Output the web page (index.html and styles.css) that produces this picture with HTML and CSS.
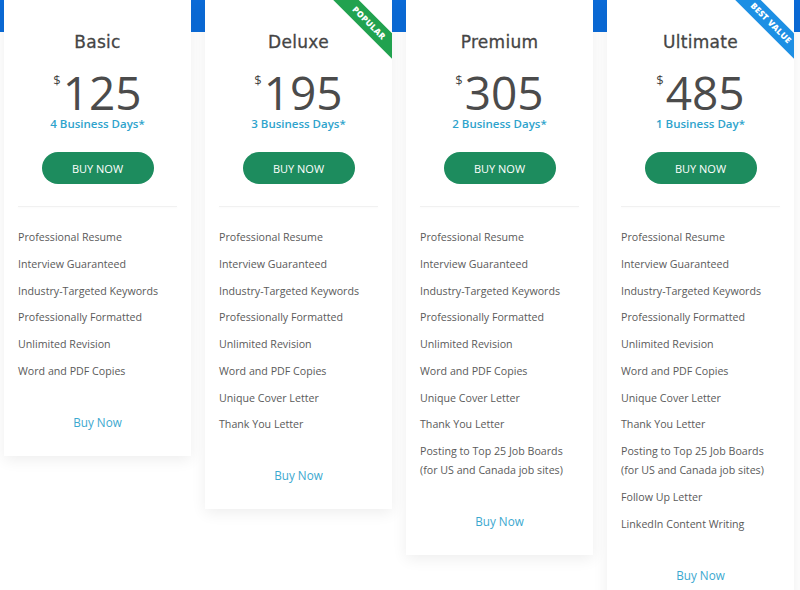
FILE: index.html
```html
<!DOCTYPE html>
<html lang="en">
<head>
<meta charset="utf-8">
<title>Pricing</title>
<link rel="stylesheet" href="styles.css">
</head>
<body>
<div class="plans">
  <div class="card">
    <h2 class="title">Basic</h2>
    <div class="price"><span class="cur">$</span><span class="amount">125</span></div>
    <div class="days">4 Business Days*</div>
    <a class="btn" href="#">BUY NOW</a>
    <div class="divider"></div>
    <ul class="features">
      <li>Professional Resume</li>
      <li>Interview Guaranteed</li>
      <li>Industry-Targeted Keywords</li>
      <li>Professionally Formatted</li>
      <li>Unlimited Revision</li>
      <li>Word and PDF Copies</li>
    </ul>
    <a class="link" href="#">Buy Now</a>
  </div>
  <div class="card">
    <div class="ribbon ribbon-green">POPULAR</div>
    <h2 class="title">Deluxe</h2>
    <div class="price"><span class="cur">$</span><span class="amount">195</span></div>
    <div class="days">3 Business Days*</div>
    <a class="btn" href="#">BUY NOW</a>
    <div class="divider"></div>
    <ul class="features">
      <li>Professional Resume</li>
      <li>Interview Guaranteed</li>
      <li>Industry-Targeted Keywords</li>
      <li>Professionally Formatted</li>
      <li>Unlimited Revision</li>
      <li>Word and PDF Copies</li>
      <li>Unique Cover Letter</li>
      <li>Thank You Letter</li>
    </ul>
    <a class="link" href="#">Buy Now</a>
  </div>
  <div class="card">
    <h2 class="title">Premium</h2>
    <div class="price"><span class="cur">$</span><span class="amount">305</span></div>
    <div class="days">2 Business Days*</div>
    <a class="btn" href="#">BUY NOW</a>
    <div class="divider"></div>
    <ul class="features">
      <li>Professional Resume</li>
      <li>Interview Guaranteed</li>
      <li>Industry-Targeted Keywords</li>
      <li>Professionally Formatted</li>
      <li>Unlimited Revision</li>
      <li>Word and PDF Copies</li>
      <li>Unique Cover Letter</li>
      <li>Thank You Letter</li>
      <li>Posting to Top 25 Job Boards<br>(for US and Canada job sites)</li>
    </ul>
    <a class="link" href="#">Buy Now</a>
  </div>
  <div class="card">
    <div class="ribbon ribbon-blue">BEST VALUE</div>
    <h2 class="title">Ultimate</h2>
    <div class="price"><span class="cur">$</span><span class="amount">485</span></div>
    <div class="days">1 Business Day*</div>
    <a class="btn" href="#">BUY NOW</a>
    <div class="divider"></div>
    <ul class="features">
      <li>Professional Resume</li>
      <li>Interview Guaranteed</li>
      <li>Industry-Targeted Keywords</li>
      <li>Professionally Formatted</li>
      <li>Unlimited Revision</li>
      <li>Word and PDF Copies</li>
      <li>Unique Cover Letter</li>
      <li>Thank You Letter</li>
      <li>Posting to Top 25 Job Boards<br>(for US and Canada job sites)</li>
      <li>Follow Up Letter</li>
      <li>LinkedIn Content Writing</li>
    </ul>
    <a class="link" href="#">Buy Now</a>
  </div>
</div>
</body>
</html>
```
FILE: styles.css
```css
html, body {
  margin: 0;
  padding: 0;
  background: #ffffff;
}

body {
  font-family: "Open Sans", "Liberation Sans", sans-serif;
  width: 800px;
  height: 590px;
  overflow: hidden;
}

.plans {
  display: flex;
  align-items: flex-start;
  gap: 14px;
  padding-left: 4px;
  background: linear-gradient(to bottom, #0b6bd8 0, #0b6bd8 32px, #ffffff 32px);
  min-height: 590px;
  box-sizing: border-box;
}

.card {
  position: relative;
  overflow: hidden;
  width: 187px;
  flex: 0 0 187px;
  background: #ffffff;
  box-shadow: 0 4px 14px rgba(0, 0, 0, 0.07);
  padding: 30px 14px 26px;
  box-sizing: border-box;
  display: flex;
  flex-direction: column;
  align-items: center;
}

.title {
  margin: 0;
  font-family: "DejaVu Sans", sans-serif;
  font-weight: normal;
  font-size: 17px;
  line-height: 24px;
  letter-spacing: 0.3px;
  color: #454545;
  -webkit-text-stroke: 0.3px #454545;
}

.price {
  margin-top: 15px;
  height: 46px;
  display: flex;
  align-items: flex-start;
  color: #4b4b4b;
}

.cur {
  font-size: 13px;
  line-height: 13px;
  margin-top: 4.5px;
  margin-right: 2px;
  color: #444444;
}

.amount {
  font-size: 46px;
  line-height: 46px;
}

.days {
  margin-top: 1px;
  font-size: 11.5px;
  line-height: 16px;
  font-weight: 600;
  color: #2ea3cc;
}

.btn {
  margin-top: 20px;
  width: 112px;
  height: 32px;
  border-radius: 16px;
  background: #1d8c5e;
  color: #ffffff;
  text-decoration: none;
  font-size: 11px;
  display: flex;
  align-items: center;
  justify-content: center;
}

.divider {
  margin-top: 22px;
  align-self: stretch;
  height: 1px;
  background: #f1f1f1;
  box-shadow: 0 1px 2px rgba(0, 0, 0, 0.03);
}

.features {
  list-style: none;
  margin: 21px 0 0;
  padding: 0;
  align-self: stretch;
  display: flex;
  flex-direction: column;
  gap: 7.75px;
  font-size: 10.67px;
  line-height: 19px;
  color: #5a5a5a;
}

.link {
  margin-top: 33px;
  font-size: 11.7px;
  line-height: 16px;
  color: #3aa8cf;
  text-decoration: none;
}

.ribbon {
  position: absolute;
  top: 14px;
  right: -27px;
  width: 100px;
  height: 18px;
  transform: rotate(45deg);
  color: #ffffff;
  font-size: 8.5px;
  font-weight: 800;
  letter-spacing: 0.3px;
  line-height: 18px;
  text-align: center;
}

.ribbon-green {
  background: #21a24f;
}

.ribbon-blue {
  background: #1c8fe4;
}
```
